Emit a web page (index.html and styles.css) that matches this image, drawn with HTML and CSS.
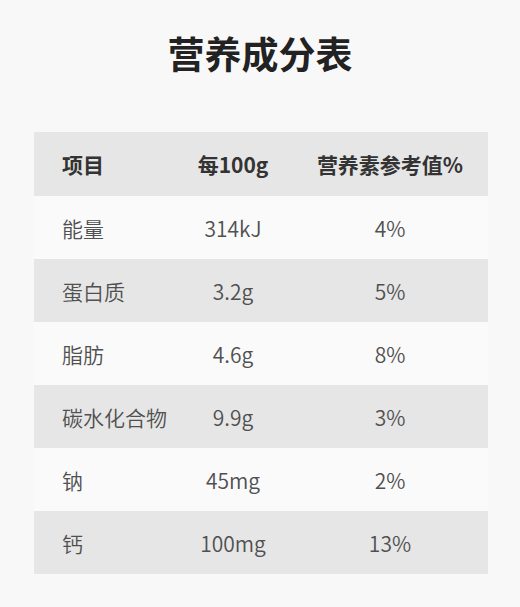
FILE: index.html
```html
<!DOCTYPE html>
<html lang="zh">
<head>
<meta charset="utf-8">
<title>营养成分表</title>
<link rel="stylesheet" href="styles.css">
</head>
<body>
<div class="page">
  <h1 class="title">营养成分表</h1>
  <div class="table">
    <div class="row head">
      <div class="c1">项目</div><div class="c2">每100g</div><div class="c3">营养素参考值%</div>
    </div>
    <div class="row">
      <div class="c1">能量</div><div class="c2">314kJ</div><div class="c3">4%</div>
    </div>
    <div class="row alt">
      <div class="c1">蛋白质</div><div class="c2">3.2g</div><div class="c3">5%</div>
    </div>
    <div class="row">
      <div class="c1">脂肪</div><div class="c2">4.6g</div><div class="c3">8%</div>
    </div>
    <div class="row alt">
      <div class="c1">碳水化合物</div><div class="c2">9.9g</div><div class="c3">3%</div>
    </div>
    <div class="row">
      <div class="c1">钠</div><div class="c2">45mg</div><div class="c3">2%</div>
    </div>
    <div class="row alt">
      <div class="c1">钙</div><div class="c2">100mg</div><div class="c3">13%</div>
    </div>
  </div>
</div>
</body>
</html>
```
FILE: styles.css
```css
html, body {
  margin: 0;
  padding: 0;
  background: #f8f8f8;
}
body {
  font-family: "Noto Sans CJK SC", "Noto Sans", sans-serif;
  width: 520px;
  height: 607px;
  overflow: hidden;
}
.page {
  display: flex;
  flex-direction: column;
  align-items: center;
  padding-top: 31px;
}
.title {
  margin: 0;
  font-size: 37px;
  line-height: 44px;
  font-weight: 700;
  color: #222;
}
.table {
  margin-top: 57px;
  width: 454px;
  margin-left: 2px;
  display: flex;
  flex-direction: column;
}
.row {
  display: grid;
  grid-template-columns: 140px 118px 196px;
  align-items: center;
  height: 63px;
  font-size: 21px;
  font-weight: 350;
  color: #505050;
  background: #fafafa;
}
.row.alt, .row.head {
  background: #e6e6e6;
}
.row.head {
  height: 64px;
  font-weight: 700;
  color: #333;
}
.c1 {
  padding-left: 28px;
}
.c2, .c3 {
  text-align: center;
  white-space: nowrap;
}
```
